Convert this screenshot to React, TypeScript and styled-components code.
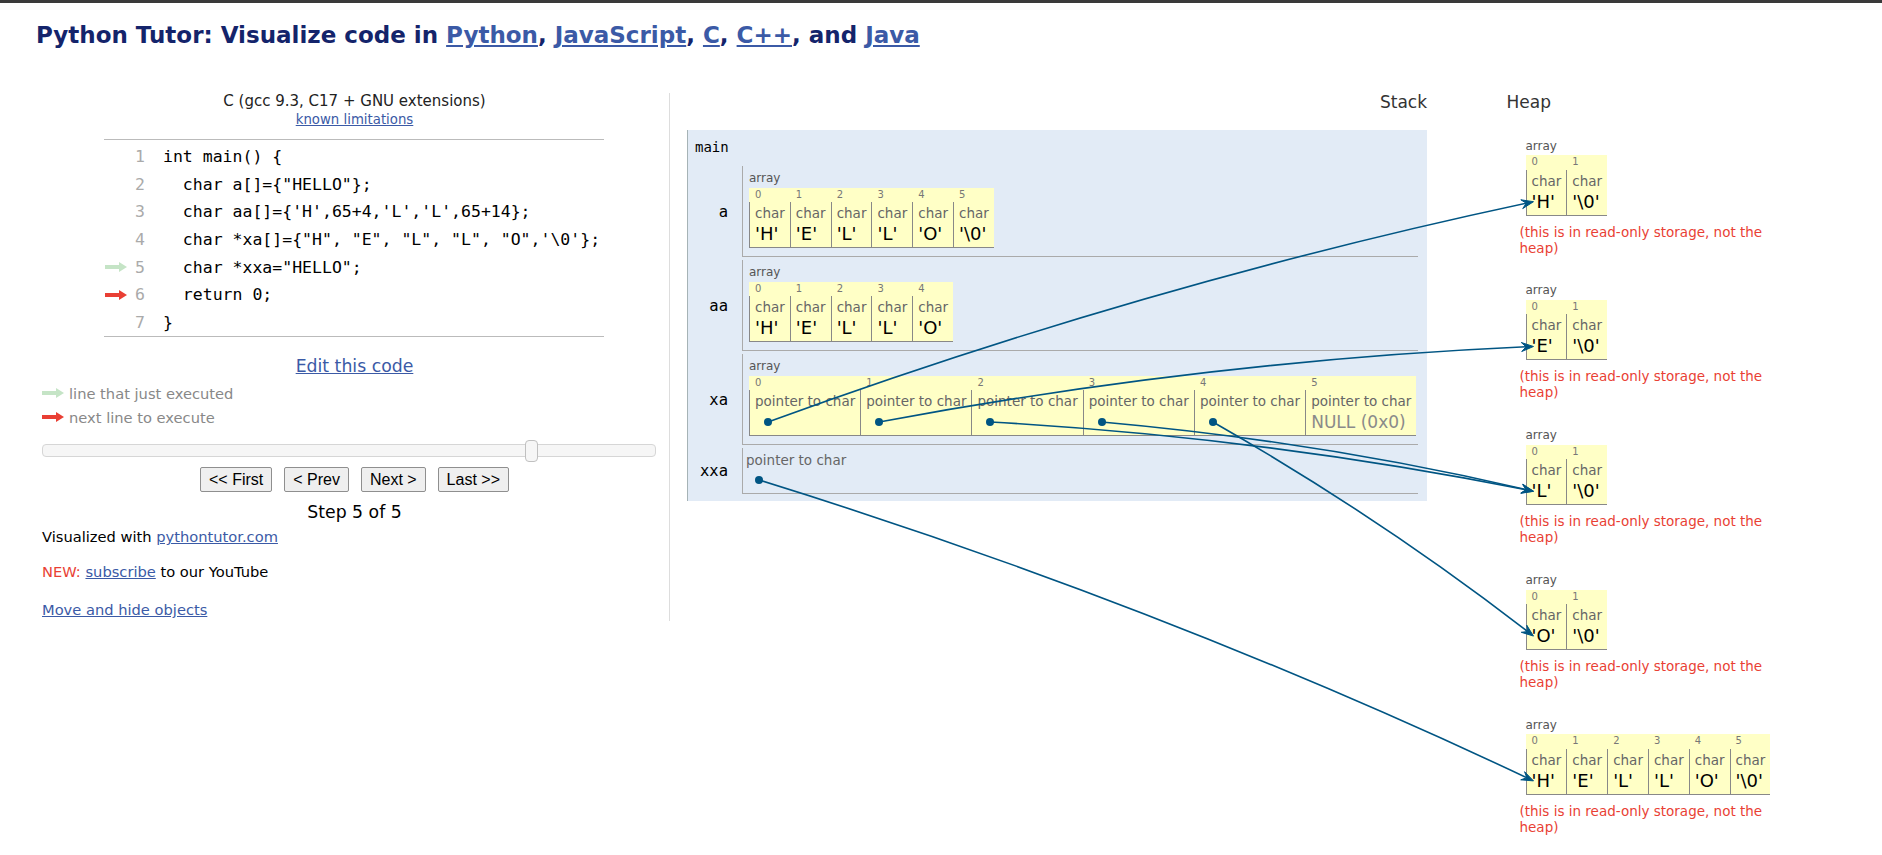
import React, { useCallback, useLayoutEffect, useRef, useState } from "react";
import styled, { createGlobalStyle } from "styled-components";

const GlobalStyle = createGlobalStyle`
  html, body { margin: 0; padding: 0; background: #ffffff; }
  body { font-family: "DejaVu Sans", Verdana, sans-serif; color: #000; }
  * { box-sizing: border-box; }
`;

const MONO = `"DejaVu Sans Mono", "Liberation Mono", monospace`;
const LINK = "#3b5aa6";
const PTR = "#005583";

const TopBar = styled.div`
  height: 3px;
  background: #3a3a3a;
`;

const Title = styled.h1`
  margin: 0;
  padding: 19px 0 0 36px;
  font-size: 23px;
  line-height: 27px;
  font-weight: bold;
  color: #14246b;
  white-space: nowrap;
`;

const TitleLink = styled.a`
  color: ${LINK};
  text-decoration: underline;
`;

const Main = styled.div`
  display: flex;
  align-items: flex-start;
  margin-top: 44px;
`;

/* ---------- left panel ---------- */

const LeftPanel = styled.div`
  margin-left: 42px;
  width: 628px;
  padding-right: 2px;
  padding-bottom: 2px;
  border-right: 1px solid #dddddd;
  display: flex;
  flex-direction: column;
`;

const LangBlock = styled.div`
  text-align: center;
  line-height: 17px;
`;

const LangName = styled.div`
  font-size: 15px;
  color: #222;
`;

const SmallLink = styled.a`
  font-size: 13.3px;
  color: ${LINK};
  text-decoration: underline;
`;

const CodeBox = styled.div`
  margin: 11px 0 0 62px;
  width: 500px;
  border-top: 1px solid #bbbbbb;
  border-bottom: 1px solid #bbbbbb;
  padding-top: 3px;
`;

const CodeRow = styled.div`
  display: flex;
  align-items: center;
  height: 27.6px;
`;

const ArrowSlot = styled.div`
  width: 23px;
  padding-left: 1px;
  display: flex;
  align-items: center;
`;

const LineNo = styled.div`
  width: 18px;
  text-align: right;
  font-family: ${MONO};
  font-size: 16.5px;
  color: #aaaaaa;
`;

const CodeText = styled.div`
  padding-left: 18px;
  white-space: pre;
  font-family: ${MONO};
  font-size: 16.5px;
  color: #000;
`;

const EditRow = styled.div`
  margin-top: 19px;
  text-align: center;
  line-height: 20px;
`;

const BigLink = styled.a`
  font-size: 17.3px;
  color: ${LINK};
  text-decoration: underline;
`;

const Legend = styled.div`
  margin-top: 4px;
  display: flex;
  flex-direction: column;
`;

const LegendRow = styled.div`
  display: flex;
  align-items: center;
  gap: 5px;
  height: 24px;
`;

const LegendText = styled.span`
  font-size: 14.67px;
  color: #888888;
`;

const SliderTrack = styled.div`
  position: relative;
  margin-top: 15px;
  width: 614px;
  height: 13px;
  border: 1px solid #d6d6d6;
  border-radius: 4px;
  background: #f6f6f6;
`;

const SliderHandle = styled.div`
  position: absolute;
  top: -5px;
  left: 80%;
  margin-left: -8px;
  width: 13px;
  height: 22px;
  border: 1px solid #c0c0c0;
  border-radius: 4px;
  background: #f6f6f6;
`;

const ButtonRow = styled.div`
  margin-top: 10px;
  display: flex;
  justify-content: center;
  gap: 12px;
`;

const NavButton = styled.button`
  height: 25px;
  padding: 0 8px;
  font-family: "Liberation Sans", Arial, sans-serif;
  font-size: 16px;
  color: #000;
  background: #efefef;
  border: 1px solid #8f8f8f;
  border-radius: 2px;
`;

const StepLabel = styled.div`
  margin-top: 9px;
  text-align: center;
  font-size: 17.3px;
  line-height: 22px;
`;

const FooterLine = styled.div<{ $mt: number }>`
  margin-top: ${(p) => p.$mt}px;
  font-size: 14.67px;
  line-height: 18px;
  color: #000;
`;

const FooterLink = styled.a`
  color: ${LINK};
  text-decoration: underline;
`;

const NewTag = styled.span`
  color: #e93f34;
`;

/* ---------- right panel ---------- */

const RightPanel = styled.div`
  position: relative;
  display: flex;
  align-items: flex-start;
  padding-left: 17px;
`;

const StackColumn = styled.div`
  width: 740px;
  display: flex;
  flex-direction: column;
`;

const HeapColumn = styled.div`
  margin-left: 79.5px;
  display: flex;
  flex-direction: column;
`;

const PanelHeader = styled.div<{ $align: "left" | "right" }>`
  font-size: 17px;
  line-height: 18px;
  color: #333333;
  text-align: ${(p) => p.$align};
`;

const StackFrame = styled.div`
  margin-top: 19px;
  background: #e2ebf6;
  border-left: 1px solid #a6b3b6;
  padding: 4px 9px 7px 7px;
`;

const FrameName = styled.div`
  margin: 5px 0 11px 0;
  font-family: ${MONO};
  font-size: 14px;
  line-height: 16px;
`;

const VarList = styled.div`
  display: flex;
  flex-direction: column;
  gap: 3px;
`;

const VarRow = styled.div`
  display: flex;
  align-items: stretch;
`;

const VarName = styled.div`
  width: 47px;
  padding-right: 14px;
  display: flex;
  align-items: center;
  justify-content: flex-end;
  font-family: ${MONO};
  font-size: 15.5px;
`;

const VarValue = styled.div<{ $pb: number }>`
  flex: 1;
  border-left: 1px solid #aaaaaa;
  border-bottom: 1px solid #aaaaaa;
  padding: 4px 0 ${(p) => p.$pb}px 3px;
`;

const ArrayBlock = styled.div<{ $ml: number }>`
  margin-left: ${(p) => p.$ml}px;
  display: flex;
  flex-direction: column;
  align-items: flex-start;
`;

const TypeLabel = styled.div`
  font-size: 12px;
  line-height: 16px;
  color: #555555;
  margin-bottom: 1.5px;
`;

const ArrayRow = styled.div`
  display: flex;
  background: #ffffc6;
`;

const ArrayCol = styled.div`
  display: flex;
  flex-direction: column;
`;

const IndexLabel = styled.div`
  height: 14.5px;
  line-height: 14.5px;
  padding-left: 6px;
  font-size: 10px;
  color: #777777;
`;

const CellBody = styled.div`
  border-left: 1px solid #888888;
  border-bottom: 1px solid #888888;
  padding: 3px 5px 0 5px;
  display: flex;
  flex-direction: column;
`;

const CellType = styled.div`
  font-size: 13.5px;
  line-height: 16px;
  color: #666666;
  white-space: nowrap;
`;

const CellValue = styled.span<{ $null?: boolean }>`
  display: block;
  font-size: ${(p) => (p.$null ? 17 : 18)}px;
  line-height: 26px;
  color: ${(p) => (p.$null ? "#8a8a8a" : "#000")};
  white-space: nowrap;
`;

const PointerSlot = styled.div<{ $h: number }>`
  height: ${(p) => p.$h}px;
  display: flex;
  align-items: center;
`;

const Dot = styled.span`
  display: block;
  width: 8px;
  height: 8px;
  margin-left: 9px;
  border-radius: 50%;
  background: ${PTR};
`;

const HeapList = styled.div`
  margin-top: 26.7px;
  display: flex;
  flex-direction: column;
`;

const HeapObject = styled.div`
  margin-left: 19px;
  margin-bottom: 26.8px;
  display: flex;
  flex-direction: column;
`;

const HeapNote = styled.div`
  margin-top: 8px;
  margin-left: -6px;
  width: 260px;
  font-size: 13.5px;
  line-height: 16px;
  color: #e93f34;
`;

const Overlay = styled.svg`
  position: absolute;
  left: 0;
  top: 0;
  width: 100%;
  height: 100%;
  overflow: visible;
  pointer-events: none;
`;

/* ---------- pieces ---------- */

const ExecArrow: React.FC<{ color: string }> = ({ color }) => (
  <svg width="22" height="10" viewBox="0 0 22 10">
    <polygon points="0,3 14,3 14,0 22,5 14,10 14,7 0,7" fill={color} />
  </svg>
);

const CODE = [
  "int main() {",
  '  char a[]={"HELLO"};',
  "  char aa[]={'H',65+4,'L','L',65+14};",
  '  char *xa[]={"H", "E", "L", "L", "O",\'\\0\'};',
  '  char *xxa="HELLO";',
  "  return 0;",
  "}",
];

const GREEN = "#c5e4c6";
const RED = "#e93f34";

type RefSetter = (el: HTMLElement | null) => void;

const CharArray: React.FC<{ values: string[]; firstRef?: RefSetter }> = ({ values, firstRef }) => (
  <ArrayRow>
    {values.map((v, i) => (
      <ArrayCol key={i}>
        <IndexLabel>{i}</IndexLabel>
        <CellBody>
          <CellType>char</CellType>
          <CellValue ref={i === 0 ? firstRef : undefined}>{`'${v}'`}</CellValue>
        </CellBody>
      </ArrayCol>
    ))}
  </ArrayRow>
);

const LINKS: { from: string; to: number }[] = [
  { from: "xa0", to: 0 },
  { from: "xa1", to: 1 },
  { from: "xa2", to: 2 },
  { from: "xa3", to: 2 },
  { from: "xa4", to: 3 },
  { from: "xxa", to: 4 },
];

const HEAP: string[][] = [
  ["H", "\\0"],
  ["E", "\\0"],
  ["L", "\\0"],
  ["O", "\\0"],
  ["H", "E", "L", "L", "O", "\\0"],
];

type Conn = { line: string; head: string };

function buildConn(sx: number, sy: number, tx: number, ty: number): Conn {
  const dx = tx - sx;
  const dy = ty - sy;
  const L = Math.hypot(dx, dy) || 1;
  const h = L * 0.035;
  const nx = dy / L;
  const ny = -dx / L;
  const cx = (sx + tx) / 2 + nx * h;
  const cy = (sy + ty) / 2 + ny * h;
  let ax = tx - cx;
  let ay = ty - cy;
  const al = Math.hypot(ax, ay) || 1;
  ax /= al;
  ay /= al;
  const len = 12;
  const w = 9;
  const fold = 0.62;
  const bx = tx - ax * len;
  const by = ty - ay * len;
  const px = -ay;
  const py = ax;
  const lx = bx + (px * w) / 2;
  const ly = by + (py * w) / 2;
  const rx = bx - (px * w) / 2;
  const ry = by - (py * w) / 2;
  const nxp = tx - ax * len * fold;
  const nyp = ty - ay * len * fold;
  return {
    line: `M ${sx} ${sy} Q ${cx} ${cy} ${nxp} ${nyp}`,
    head: `M ${tx} ${ty} L ${lx} ${ly} L ${nxp} ${nyp} L ${rx} ${ry} Z`,
  };
}

export default function App() {
  const panelRef = useRef<HTMLDivElement | null>(null);
  const dots = useRef<Record<string, HTMLElement | null>>({});
  const targets = useRef<(HTMLElement | null)[]>([]);
  const [conns, setConns] = useState<Conn[]>([]);

  const dotRef = useCallback(
    (key: string): RefSetter =>
      (el) => {
        dots.current[key] = el;
      },
    []
  );
  const targetRef = useCallback(
    (i: number): RefSetter =>
      (el) => {
        targets.current[i] = el;
      },
    []
  );

  useLayoutEffect(() => {
    const compute = () => {
      const panel = panelRef.current;
      if (!panel) return;
      const pr = panel.getBoundingClientRect();
      const list: Conn[] = [];
      for (const l of LINKS) {
        const s = dots.current[l.from];
        const t = targets.current[l.to];
        if (!s || !t) continue;
        const sr = s.getBoundingClientRect();
        const tr = t.getBoundingClientRect();
        const sx = sr.left + sr.width / 2 - pr.left;
        const sy = sr.top + sr.height / 2 - pr.top;
        const tx = tr.left + 2 - pr.left;
        const ty = tr.top + tr.height / 2 - pr.top;
        list.push(buildConn(sx, sy, tx, ty));
      }
      setConns(list);
    };
    compute();
    if (document.fonts && document.fonts.ready) {
      document.fonts.ready.then(compute);
    }
    window.addEventListener("resize", compute);
    return () => window.removeEventListener("resize", compute);
  }, []);

  return (
    <>
      <GlobalStyle />
      <TopBar />
      <Title>
        Python Tutor: Visualize code in <TitleLink href="#">Python</TitleLink>,{" "}
        <TitleLink href="#">JavaScript</TitleLink>, <TitleLink href="#">C</TitleLink>,{" "}
        <TitleLink href="#">C++</TitleLink>, and <TitleLink href="#">Java</TitleLink>
      </Title>
      <Main>
        <LeftPanel>
          <LangBlock>
            <LangName>C (gcc 9.3, C17 + GNU extensions)</LangName>
            <SmallLink href="#">known limitations</SmallLink>
          </LangBlock>
          <CodeBox>
            {CODE.map((c, i) => (
              <CodeRow key={i}>
                <ArrowSlot>
                  {i === 4 && <ExecArrow color={GREEN} />}
                  {i === 5 && <ExecArrow color={RED} />}
                </ArrowSlot>
                <LineNo>{i + 1}</LineNo>
                <CodeText>{c}</CodeText>
              </CodeRow>
            ))}
          </CodeBox>
          <EditRow>
            <BigLink href="#">Edit this code</BigLink>
          </EditRow>
          <Legend>
            <LegendRow>
              <ExecArrow color={GREEN} />
              <LegendText>line that just executed</LegendText>
            </LegendRow>
            <LegendRow>
              <ExecArrow color={RED} />
              <LegendText>next line to execute</LegendText>
            </LegendRow>
          </Legend>
          <SliderTrack>
            <SliderHandle />
          </SliderTrack>
          <ButtonRow>
            <NavButton>&lt;&lt; First</NavButton>
            <NavButton>&lt; Prev</NavButton>
            <NavButton>Next &gt;</NavButton>
            <NavButton>Last &gt;&gt;</NavButton>
          </ButtonRow>
          <StepLabel>Step 5 of 5</StepLabel>
          <FooterLine $mt={5}>
            Visualized with <FooterLink href="#">pythontutor.com</FooterLink>
          </FooterLine>
          <FooterLine $mt={17}>
            <NewTag>NEW: </NewTag>
            <FooterLink href="#">subscribe</FooterLink> to our YouTube
          </FooterLine>
          <FooterLine $mt={20}>
            <FooterLink href="#">Move and hide objects</FooterLink>
          </FooterLine>
        </LeftPanel>

        <RightPanel ref={panelRef}>
          <StackColumn>
            <PanelHeader $align="right">Stack</PanelHeader>
            <StackFrame>
              <FrameName>main</FrameName>
              <VarList>
                <VarRow>
                  <VarName>a</VarName>
                  <VarValue $pb={8}>
                    <ArrayBlock $ml={3}>
                      <TypeLabel>array</TypeLabel>
                      <CharArray values={["H", "E", "L", "L", "O", "\\0"]} />
                    </ArrayBlock>
                  </VarValue>
                </VarRow>
                <VarRow>
                  <VarName>aa</VarName>
                  <VarValue $pb={8}>
                    <ArrayBlock $ml={3}>
                      <TypeLabel>array</TypeLabel>
                      <CharArray values={["H", "E", "L", "L", "O"]} />
                    </ArrayBlock>
                  </VarValue>
                </VarRow>
                <VarRow>
                  <VarName>xa</VarName>
                  <VarValue $pb={8}>
                    <ArrayBlock $ml={3}>
                      <TypeLabel>array</TypeLabel>
                      <ArrayRow>
                        {[0, 1, 2, 3, 4, 5].map((i) => (
                          <ArrayCol key={i}>
                            <IndexLabel>{i}</IndexLabel>
                            <CellBody>
                              <CellType>pointer to char</CellType>
                              {i < 5 ? (
                                <PointerSlot $h={26}>
                                  <Dot ref={dotRef(`xa${i}`)} />
                                </PointerSlot>
                              ) : (
                                <CellValue $null>NULL (0x0)</CellValue>
                              )}
                            </CellBody>
                          </ArrayCol>
                        ))}
                      </ArrayRow>
                    </ArrayBlock>
                  </VarValue>
                </VarRow>
                <VarRow>
                  <VarName>xxa</VarName>
                  <VarValue $pb={1}>
                    <CellType>pointer to char</CellType>
                    <PointerSlot $h={24}>
                      <Dot ref={dotRef("xxa")} />
                    </PointerSlot>
                  </VarValue>
                </VarRow>
              </VarList>
            </StackFrame>
          </StackColumn>

          <HeapColumn>
            <PanelHeader $align="left">Heap</PanelHeader>
            <HeapList>
              {HEAP.map((vals, i) => (
                <HeapObject key={i}>
                  <ArrayBlock $ml={0}>
                    <TypeLabel>array</TypeLabel>
                    <CharArray values={vals} firstRef={targetRef(i)} />
                  </ArrayBlock>
                  <HeapNote>(this is in read-only storage, not the heap)</HeapNote>
                </HeapObject>
              ))}
            </HeapList>
          </HeapColumn>

          <Overlay>
            {conns.map((c, i) => (
              <g key={i}>
                <path d={c.line} fill="none" stroke={PTR} strokeWidth={1.6} />
                <path d={c.head} fill={PTR} stroke={PTR} strokeWidth={1} strokeLinejoin="miter" />
              </g>
            ))}
          </Overlay>
        </RightPanel>
      </Main>
    </>
  );
}
